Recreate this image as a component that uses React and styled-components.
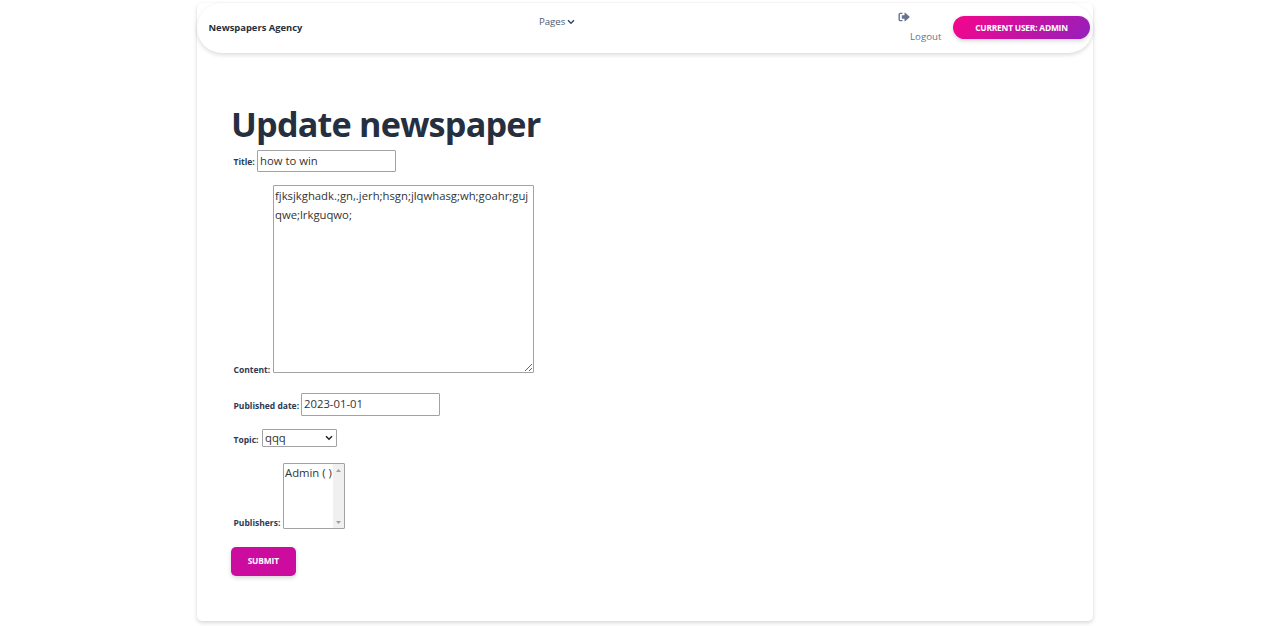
import React from "react";
import styled, { createGlobalStyle, css } from "styled-components";

const GlobalStyle = createGlobalStyle`
  * { box-sizing: border-box; }
  body {
    margin: 0;
    height: 626px;
    overflow: hidden;
    background: #fff;
    color: #252f40;
    font-family: "Open Sans", "Noto Sans", sans-serif;
  }
`;

const Page = styled.main`
  width: 896px;
  height: 618px;
  margin: 3px 0 0 197px;
  border-radius: 5px;
  box-shadow: 0 2px 4px rgba(0, 0, 0, 0.15), 0 0 2px rgba(0, 0, 0, 0.03);
`;

const Navbar = styled.nav`
  display: flex;
  align-items: flex-start;
  height: 50px;
  padding: 0 3px 0 11.5px;
  border-radius: 32px;
  box-shadow: 0 2px 4px rgba(0, 0, 0, 0.14);
`;

const Brand = styled.a`
  width: 330.5px;
  padding-top: 17.5px;
  font-size: 9.4px;
  font-weight: 700;
  line-height: 14px;
`;

const PagesMenu = styled.a`
  display: flex;
  align-items: center;
  gap: 2px;
  width: 359px;
  padding-top: 11.5px;
  color: #4d5a70;
  font-size: 9.6px;
  line-height: 14px;
`;

const Logout = styled.a`
  display: flex;
  flex-direction: column;
  width: 55px;
  padding-top: 9px;
  color: #67748e;
  font-size: 9.7px;
  line-height: 14px;

  svg { display: block; }
  span { margin: 8px 0 0 12px; }
`;

const button = css`
  border: 0;
  padding: 0;
  color: #fff;
  font-family: inherit;
  font-weight: 700;
  text-transform: uppercase;
  white-space: nowrap;
`;

const UserButton = styled.button`
  ${button}
  flex: none;
  width: 137px;
  height: 23px;
  margin-top: 13px;
  border-radius: 12px;
  background: linear-gradient(310deg, #951fbb, #f7058b);
  box-shadow: 0 2px 4px rgba(0, 0, 0, 0.16);
  font-size: 8.4px;
  letter-spacing: -0.2px;
`;

const Form = styled.form`
  display: flex;
  flex-direction: column;
  align-items: flex-start;
  padding: 49px 34px 0;
`;

const Heading = styled.h1`
  margin: 0;
  font-size: 34.2px;
  font-weight: 700;
  letter-spacing: -0.8px;
  line-height: 43px;
  height: 48px;
  white-space: nowrap;
`;

const Field = styled.div`
  display: flex;
  align-items: flex-end;
  height: ${(p) => p.$height}px;
  margin: 0 0 ${(p) => p.$gap}px 2.5px;
`;

const Label = styled.label`
  flex: none;
  width: ${(p) => p.$width}px;
  margin-bottom: ${(p) => p.$drop}px;
  color: #2d3a54;
  font-size: 8.5px;
  font-weight: 700;
  line-height: 12px;
  white-space: nowrap;
`;

const control = css`
  margin: 0;
  height: 100%;
  border: 1px solid #a2a2a2;
  border-radius: 1px;
  background: #fff;
  color: #333;
  font-family: inherit;
  font-size: 11.3px;
  outline: none;
`;

const TextInput = styled.input`
  ${control}
  width: 139px;
  padding: 0 2px 1px;
`;

const TextArea = styled.textarea`
  ${control}
  width: 261px;
  padding: 1px 1px;
  line-height: 18.5px;
  word-break: break-all;
  overflow: hidden;
`;

const SelectBox = styled.div`
  ${control}
  display: flex;
  align-items: center;
  justify-content: space-between;
  width: 75px;
  padding: 0 3px 0 2.5px;
`;

const ListBox = styled.div`
  ${control}
  display: flex;
  width: 62px;
  line-height: 17px;
`;

const Option = styled.div`
  flex: 1;
  padding-left: 1px;
  white-space: nowrap;
`;

const ScrollTrack = styled.div`
  display: flex;
  flex-direction: column;
  align-items: center;
  justify-content: space-between;
  width: 11px;
  padding: 5px 0 4px;
  background: #f0f0f0;
`;

const Submit = styled.button`
  ${button}
  width: 64.5px;
  height: 29px;
  padding-bottom: 1px;
  border-radius: 5px;
  background: #cb0c9f;
  box-shadow: 0 2px 4px rgba(0, 0, 0, 0.16);
  font-size: 8.4px;
  letter-spacing: -0.15px;
`;

function Chevron({ color = "#344767" }) {
  return (
    <svg width="8" height="6" viewBox="0 0 8 6" fill="none" stroke={color} strokeWidth="1.5">
      <path d="M1 1.3 4 4.2 7 1.3" />
    </svg>
  );
}

function LogoutIcon() {
  return (
    <svg width="12" height="10" viewBox="0 0 12 10" fill="none">
      <path d="M4.5 1.4H2.4Q1.2 1.4 1.2 2.6V7.4Q1.2 8.6 2.4 8.6H4.5" stroke="#67748e" strokeWidth="1.4" />
      <path d="M3.8 3.2H6.5V1.1Q6.6.4 7.2.8L11.4 4.5Q11.8 5 11.4 5.5L7.2 9.2Q6.6 9.6 6.5 8.9V6.8H3.8Z" fill="#67748e" />
    </svg>
  );
}

function Arrow({ down }) {
  return (
    <svg width="5" height="3" viewBox="0 0 5 3">
      <path d={down ? "M0 0H5L2.5 3Z" : "M0 3H5L2.5 0Z"} fill="#a0a0a0" />
    </svg>
  );
}

export default function App() {
  return (
    <>
      <GlobalStyle />
      <Page>
        <Navbar>
          <Brand>Newspapers Agency</Brand>
          <PagesMenu>Pages <Chevron /></PagesMenu>
          <Logout>
            <LogoutIcon />
            <span>Logout</span>
          </Logout>
          <UserButton>Current user: admin</UserButton>
        </Navbar>
        <Form>
          <Heading>Update newspaper</Heading>
          <Field $height={22} $gap={13.4}>
            <Label $width={23.5} $drop={4}>Title:</Label>
            <TextInput defaultValue="how to win" />
          </Field>
          <Field $height={187.6} $gap={20}>
            <Label $width={39.5} $drop={-3}>Content:</Label>
            <TextArea spellCheck={false} defaultValue="fjksjkghadk.;gn,.jerh;hsgn;jlqwhasg;wh;goahr;gujqwe;lrkguqwo;" />
          </Field>
          <Field $height={23} $gap={13}>
            <Label $width={67.5} $drop={4}>Published date:</Label>
            <TextInput defaultValue="2023-01-01" />
          </Field>
          <Field $height={18} $gap={16}>
            <Label $width={28} $drop={1}>Topic:</Label>
            <SelectBox>qqq <Chevron color="#222" /></SelectBox>
          </Field>
          <Field $height={66.5} $gap={17.5}>
            <Label $width={49.5} $drop={0.5}>Publishers:</Label>
            <ListBox>
              <Option>Admin ( )</Option>
              <ScrollTrack><Arrow /><Arrow down /></ScrollTrack>
            </ListBox>
          </Field>
          <Submit type="button">Submit</Submit>
        </Form>
      </Page>
    </>
  );
}
